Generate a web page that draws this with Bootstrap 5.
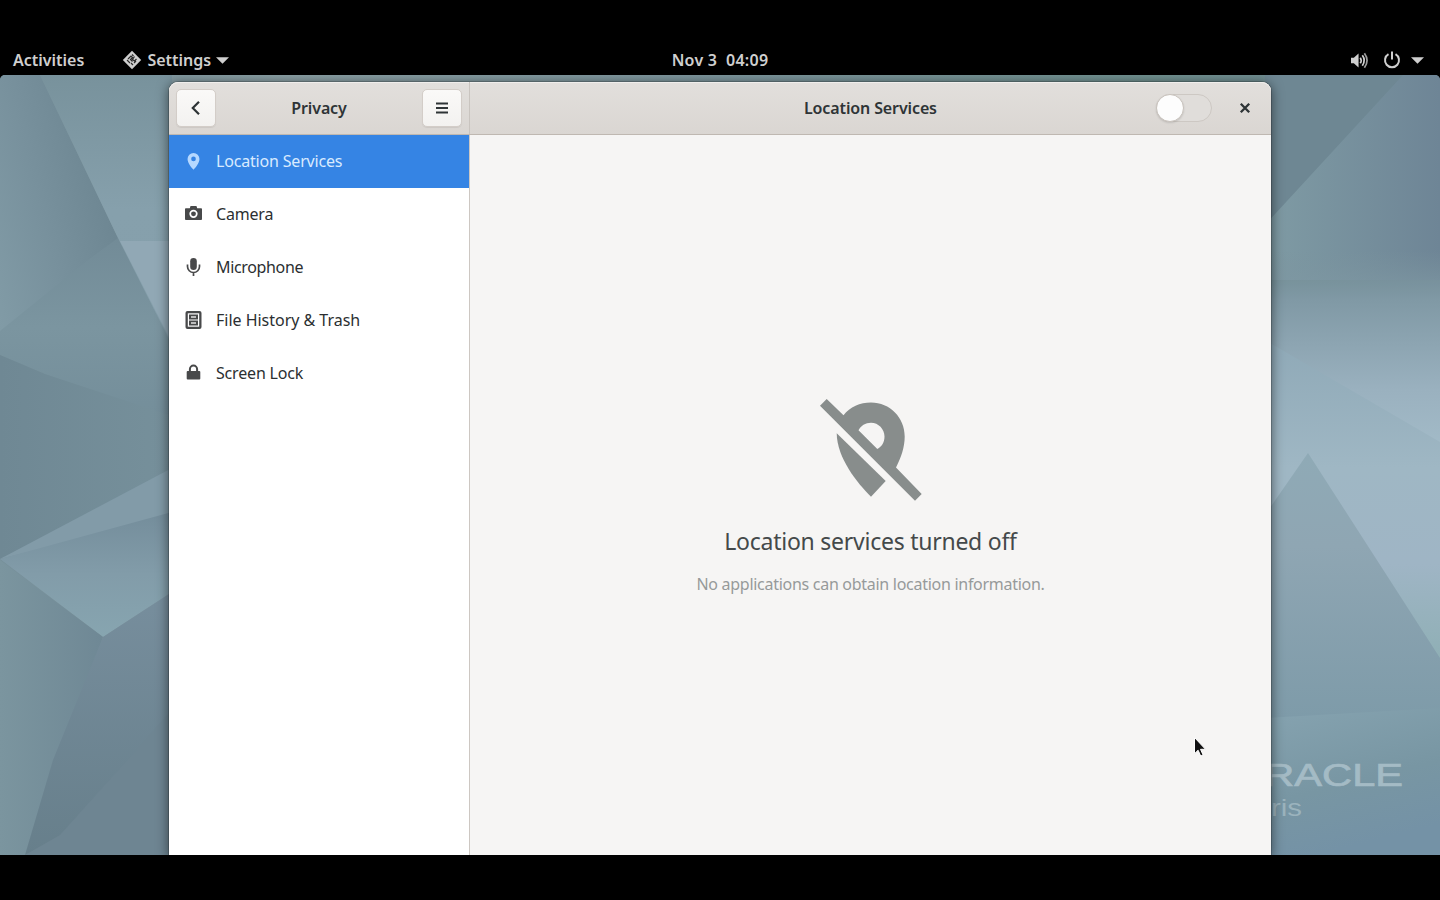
<!DOCTYPE html>
<html lang="en">
  <head>
    <meta charset="UTF-8" />
    <meta name="viewport" content="width=device-width, initial-scale=1" />
    <title>Privacy - Location Services</title>
    <link
      rel="stylesheet"
      href="https://cdn.jsdelivr.net/npm/bootstrap@5.3.0/dist/css/bootstrap.min.css"
    />
    <style>
      body {
        font-family: "Noto Sans", "Open Sans", sans-serif;
        font-size: 16px;
        line-height: 24px;
        background: #000;
        color: #2e3436;
      }

      svg {
        display: block;
        flex-shrink: 0;
      }

      /* Top bar */
      .top-bar {
        height: 75px;
        padding: 45px 16px 0 13px;
        color: #cfcfcf;
        font-weight: 600;
      }

      .top-side {
        flex: 1 1 0;
      }

      .app-icon {
        margin: 0 5px 0 38px;
      }

      .top-arrow {
        margin-left: 5px;
      }

      .top-clock {
        letter-spacing: 0.25px;
        margin-left: 3px;
      }

      .power-icon {
        margin: 0 10px 0 14px;
      }

      /* Desktop */
      .desktop {
        height: 780px;
        border-radius: 5px 5px 0 0;
        padding: 7px 169px 0;
      }

      .wallpaper {
        position: absolute;
        left: 0;
        top: 0;
      }

      .app-window {
        height: 773px;
        border-radius: 9px 9px 0 0;
        box-shadow: 0 2px 12px 1px rgba(0, 0, 0, 0.5), 0 0 0 1px rgba(0, 0, 0, 0.18);
        background: #f6f5f4;
      }

      .title-bar {
        height: 53px;
        border-radius: 9px 9px 0 0;
        background: linear-gradient(#e2dfdc, #dad6d2);
        border-bottom: 1px solid #bfb8b1;
        box-shadow: inset 0 1px #f0eeec;
        font-weight: 600;
        letter-spacing: -0.12px;
      }

      .title-left {
        width: 301px;
        padding: 0 7px;
        border-right: 1px solid #c9c4bf;
      }

      .title-right {
        padding-right: 16px;
      }

      .title-text {
        margin-left: 334px;
      }

      .close-icon {
        margin-left: 23px;
      }

      .tool-btn {
        --bs-btn-padding-x: 0;
        --bs-btn-padding-y: 0;
        width: 40px;
        height: 38px;
        border: 1px solid #d3cdc8;
        border-radius: 5px;
        background: linear-gradient(#faf9f8, #f3f2f0);
        box-shadow: 0 1px 1px rgba(0, 0, 0, 0.07);
        color: #2e3436;
      }

      .side-panel {
        width: 301px;
        border-right: 1px solid #cdc7c2;
        background: #fff;
      }

      .side-panel .list-group-item {
        height: 53px;
        padding: 0 16px 2px;
        border: 0;
        color: #2b2f31;
        letter-spacing: -0.18px;
        --bs-list-group-active-bg: #3584e4;
      }

      .side-panel .list-group-item.active {
        margin: 0;
        padding-bottom: 1px;
        color: #d9ebff;
      }

      .side-panel .list-group-item svg {
        margin-right: 14px;
        color: #48494a;
      }

      .side-panel .list-group-item.active svg {
        color: #b5d8ff;
      }

      .side-panel .wide-label {
        letter-spacing: -0.02px;
      }

      .side-panel .tight-label {
        letter-spacing: -0.35px;
      }

      /* Switch */
      .gnome-switch {
        width: 56px;
        height: 28px;
        border: 1px solid #cdc8c3;
        border-radius: 14px;
        background: #e0ddda;
      }

      .switch-knob {
        width: 28px;
        height: 28px;
        margin: -1px;
        border: 1px solid #c8c2bc;
        border-radius: 50%;
        background: #fdfdfd;
        box-shadow: 0 1px 2px rgba(0, 0, 0, 0.12);
      }

      /* Empty state */
      .off-icon {
        margin: 245px 2px 0 0;
      }

      .empty-title {
        margin-top: 5px;
        font-size: 23px;
        line-height: 32px;
        letter-spacing: -0.25px;
        color: #44494a;
      }

      .empty-text {
        margin-top: 15px;
        letter-spacing: -0.28px;
        color: #969a9a;
      }

      .pointer {
        position: absolute;
        left: 1193px;
        top: 661px;
      }
    </style>
  </head>
  <body class="vh-100 overflow-hidden">
    <!-- Top bar -->
    <header class="top-bar d-flex align-items-center">
      <div class="top-side d-flex align-items-center">
        <span>Activities</span>
        <svg class="app-icon" width="20" height="20" viewBox="0 0 20 20">
          <path d="M10 .8 19.200 10 10 19.200.8 10Z" fill="#cfcfcf" />
          <path d="m6 9 3-3 1.500 1.500-2 2 2 2M9 13l2 2M12.500 6.500l-2 3 2 1.500 2-2M12 13l2-2" fill="none" stroke="#2a2a2a" stroke-width="1.200" />
          <path d="m5 10 3 3M10 4.500l1.500 1.500" stroke="#2a2a2a" stroke-width="1.100" />
        </svg>
        <span>Settings</span>
        <svg class="top-arrow" width="13" height="7" viewBox="0 0 13 7">
          <path d="M0 .3h13L6.500 6.700Z" fill="#cfcfcf" />
        </svg>
      </div>
      <div class="top-clock">Nov 3&nbsp; 04:09</div>
      <div class="top-side d-flex align-items-center justify-content-end">
        <svg width="19" height="17" viewBox="0 0 20 18">
          <path d="M1 6h3l5-4.500v15L4 12H1Z" fill="#cfcfcf" />
          <path d="M10.800 6q2 3 0 6M13 3.500q4 5.500 0 11" fill="none" stroke="#cfcfcf" stroke-width="1.800" />
          <path d="M15.200 1.300q5.600 7.700 0 15.400" fill="none" stroke="#9d9d9d" stroke-width="1.800" />
        </svg>
        <svg class="power-icon" width="18" height="18" viewBox="0 0 18 18" fill="none" stroke="#cfcfcf" stroke-width="2">
          <path d="M5.500 3.200a7 7 0 1 0 7 0M9 .5v8" />
        </svg>
        <svg width="13" height="7" viewBox="0 0 13 7">
          <path d="M0 .3h13L6.500 6.700Z" fill="#cfcfcf" />
        </svg>
      </div>
    </header>

    <!-- Desktop -->
    <main class="desktop position-relative overflow-hidden">
      <svg class="wallpaper" width="1440" height="780" viewBox="0 75 1440 780">
        <defs>
          <linearGradient id="g1" x1="0" y1="1" x2="1" y2=".45">
            <stop offset="0" stop-color="#819ba6" />
            <stop offset=".5" stop-color="#77909c" />
            <stop offset="1" stop-color="#6c8591" />
          </linearGradient>
          <linearGradient id="g2" x1="0" y1="0" x2="0" y2="1">
            <stop offset="0" stop-color="#78929c" />
            <stop offset=".5" stop-color="#86a0ac" />
            <stop offset="1" stop-color="#859fab" />
          </linearGradient>
          <linearGradient id="g3" x1="0" y1="0" x2="0" y2="1">
            <stop offset="0" stop-color="#728b97" />
            <stop offset=".5" stop-color="#7b95a0" />
            <stop offset="1" stop-color="#748e9a" />
          </linearGradient>
          <linearGradient id="g4" x1="0" y1="0" x2="1" y2="0">
            <stop offset="0" stop-color="#6f8894" />
            <stop offset="1" stop-color="#76909b" />
          </linearGradient>
          <linearGradient id="g5" x1="0" y1="0" x2="0" y2="1">
            <stop offset="0" stop-color="#748d9b" />
            <stop offset=".5" stop-color="#829ca9" />
            <stop offset="1" stop-color="#87a5b0" />
          </linearGradient>
          <linearGradient id="g6" x1="0" y1="0" x2="1" y2="0">
            <stop offset="0" stop-color="#7b959f" />
            <stop offset="1" stop-color="#6f8895" />
          </linearGradient>
          <linearGradient id="g7" x1="0" y1="0" x2="0" y2="1">
            <stop offset="0" stop-color="#778e9d" />
            <stop offset="1" stop-color="#677f8b" />
          </linearGradient>
          <linearGradient id="g8" x1="0" y1="0" x2="1" y2="0">
            <stop offset="0" stop-color="#7f9ba4" />
            <stop offset="1" stop-color="#6e8596" />
          </linearGradient>
          <linearGradient id="g9" x1="0" y1="0" x2="0" y2="1">
            <stop offset="0" stop-color="#7a939d" stop-opacity="0" />
            <stop offset=".25" stop-color="#8099a5" />
            <stop offset=".7" stop-color="#9ab1bf" />
            <stop offset="1" stop-color="#a3bbc8" />
          </linearGradient>
          <linearGradient id="g10" x1="0" y1="0" x2="0" y2="1">
            <stop offset="0" stop-color="#8fa9b7" />
            <stop offset=".4" stop-color="#9fb7c4" />
            <stop offset=".7" stop-color="#9fb5c5" />
            <stop offset="1" stop-color="#8fafb5" />
          </linearGradient>
          <linearGradient id="g11" x1="0" y1="0" x2="0" y2="1">
            <stop offset="0" stop-color="#8faab6" />
            <stop offset=".35" stop-color="#8fa6b3" />
            <stop offset="1" stop-color="#7e9ba9" />
          </linearGradient>
          <linearGradient id="g12" x1="0" y1="0" x2=".3" y2="1">
            <stop offset="0" stop-color="#86a3b0" />
            <stop offset=".6" stop-color="#7896a3" />
            <stop offset="1" stop-color="#7492a6" />
          </linearGradient>
          <linearGradient id="g13" x1="0" y1="0" x2="1" y2="0">
            <stop offset="0" stop-color="#768f99" />
            <stop offset=".2" stop-color="#8a9fa4" />
            <stop offset=".5" stop-color="#7c959c" />
            <stop offset=".8" stop-color="#70908f" />
            <stop offset="1" stop-color="#708995" />
          </linearGradient>
        </defs>
        <path d="M0 75h1440v780H0Z" fill="url(#g13)" />
        <!-- left facets -->
        <path d="m0 328 88-70 30-22 54 107v75L45 374 0 355Z" fill="url(#g3)" />
        <path d="M0 75h40l78 163-30 22L0 331Z" fill="url(#g1)" />
        <path d="M40 75h132v270l-54-107Z" fill="url(#g2)" />
        <path d="M120 241h52v102Z" fill="#91a8b5" />
        <path d="m0 355 45 19 127 42v60L0 559Z" fill="url(#g4)" />
        <path d="m0 559 172-91v48Z" fill="#829ba8" />
        <path d="m0 559 172-47v80l-69 45Z" fill="url(#g5)" />
        <path d="m0 560 103 77-50 150-28 68H0Z" fill="url(#g6)" />
        <path d="m103 637 69-45v122L60 840l-35 15 28-95Z" fill="url(#g7)" />
        <path d="M172 710v145H25l35-20Z" fill="#6e8592" />
        <!-- right facets -->
        <path d="M1265 75h138l-121 132-17 18Z" fill="#6e8793" />
        <path d="M1403 75h37v205h-175v-55Z" fill="url(#g8)" />
        <path d="M1265 250h175v200l-175-105Z" fill="url(#g9)" />
        <path d="m1265 340 175 102v218h-175Z" fill="url(#g10)" />
        <path d="m1308 453 132 205v60h-175V515Z" fill="url(#g11)" />
        <path d="m1265 718 175-10v147h-175Z" fill="url(#g12)" />
        <!-- desktop branding -->
        <g font-family="Liberation Sans, sans-serif">
          <text x="1232" y="786" font-size="32" textLength="171" lengthAdjust="spacingAndGlyphs" fill="#a4bbc5" stroke="#a4bbc5" stroke-width=".7">ORACLE</text>
          <text x="1212" y="816" font-size="24" textLength="90" lengthAdjust="spacingAndGlyphs" fill="#9bb3bd">Solaris</text>
        </g>
      </svg>

      <!-- Settings window -->
      <div class="app-window position-relative d-flex flex-column">
        <div class="title-bar d-flex">
          <div class="title-left d-flex align-items-center justify-content-between">
            <button class="btn tool-btn d-flex align-items-center justify-content-center" type="button" aria-label="Back">
              <svg width="16" height="16" viewBox="0 0 16 16" fill="none" stroke="currentColor" stroke-width="2.200">
                <path d="M11 1.800 4.800 8l6.200 6.200" />
              </svg>
            </button>
            <span>Privacy</span>
            <button class="btn tool-btn d-flex align-items-center justify-content-center" type="button" aria-label="Menu">
              <svg width="12" height="12" viewBox="0 0 12 12" fill="none" stroke="currentColor" stroke-width="2">
                <path d="M0 1.500h12M0 6h12M0 10.500h12" />
              </svg>
            </button>
          </div>
          <div class="title-right flex-grow-1 d-flex align-items-center">
            <span class="title-text">Location Services</span>
            <div class="gnome-switch ms-auto" role="switch" aria-checked="false">
              <div class="switch-knob"></div>
            </div>
            <svg class="close-icon" width="20" height="20" viewBox="0 0 20 20" stroke="#2e3436" stroke-width="2.300">
              <path d="m5.800 5.800 8.400 8.400M14.200 5.800l-8.400 8.400" />
            </svg>
          </div>
        </div>

        <div class="flex-grow-1 d-flex">
          <nav class="side-panel">
            <div class="list-group list-group-flush">
              <a href="#" class="list-group-item active d-flex align-items-center">
                <svg width="17" height="17" viewBox="0 0 16 16" fill="currentColor">
                  <path fill-rule="evenodd" d="M8 0a5.600 5.600 0 0 0-5.600 5.600C2.400 9.500 6 13.500 8 15.800c2-2.300 5.600-6.300 5.600-10.200A5.600 5.600 0 0 0 8 0Zm0 3.400a2.200 2.200 0 1 1 0 4.400 2.200 2.200 0 0 1 0-4.400Z" />
                </svg>
                <span>Location Services</span>
              </a>
              <a href="#" class="list-group-item d-flex align-items-center">
                <svg width="17" height="17" viewBox="0 0 16 16" fill="currentColor">
                  <path d="M5.200 1h5.600l.7 2h3.700q.8 0 .8.800v9.400q0 .8-.8.800H.8q-.8 0-.8-.8V3.800Q0 3 .8 3h3.700Z" />
                  <circle cx="8" cy="8.300" r="3.100" fill="none" stroke="#fff" stroke-width="1.600" />
                </svg>
                <span>Camera</span>
              </a>
              <a href="#" class="list-group-item d-flex align-items-center">
                <svg width="17" height="18" viewBox="0 0 17 18" fill="none" stroke="currentColor" stroke-width="1.700">
                  <rect x="5.200" y="0" width="6.600" height="12" rx="3.300" fill="currentColor" stroke="none" />
                  <path d="M2.500 6.500v2a6 6 0 0 0 12 0v-2M8.500 14.300V18" />
                </svg>
                <span class="tight-label">Microphone</span>
              </a>
              <a href="#" class="list-group-item d-flex align-items-center">
                <!-- two-drawer cabinet -->
                <svg width="17" height="18" viewBox="0 0 17 18">
                  <rect x=".5" width="16" height="18" rx="2" fill="currentColor" />
                  <rect x="2.800" y="2.300" width="11.400" height="13.400" fill="#fff" />
                  <rect x="4" y="3.500" width="9" height="5" fill="currentColor" />
                  <rect x="4" y="9.500" width="9" height="5" fill="currentColor" />
                  <path d="M6 6h5M6 12h5" stroke="#e4e4e4" stroke-width="1.400" />
                </svg>
                <span class="wide-label">File History &amp; Trash</span>
              </a>
              <a href="#" class="list-group-item d-flex align-items-center">
                <svg width="17" height="17" viewBox="0 0 17 17">
                  <path d="M4.900 8V5.200a3.600 3.600 0 0 1 7.200 0V8" fill="none" stroke="currentColor" stroke-width="2" />
                  <rect x="1.700" y="7" width="13.600" height="8.500" rx="1" fill="currentColor" />
                </svg>
                <span>Screen Lock</span>
              </a>
            </div>
          </nav>

          <section class="flex-grow-1 d-flex flex-column align-items-center">
            <svg class="off-icon" width="140" height="140" viewBox="0 0 140 140" fill="#888d8c">
              <path d="m26.700 19 16.800 16.200C50 27 60 22.500 71 22.500c19 0 33.700 15 33.700 34 0 11-3.700 21-8.700 31l25.700 26.500-6.700 6.700-95-95ZM58.500 50.300 77.300 69C82 66.500 84.500 62 84.500 56.500 84.500 49 78.500 42.700 71 42.700c-5.500 0-10.300 3-12.500 7.600Z" fill-rule="evenodd" />
              <path d="m36.700 53.300 49 47.700L71 116.700C57 103 37 78 36.700 53.300Z" />
            </svg>
            <div class="empty-title">Location services turned off</div>
            <div class="empty-text">No applications can obtain location information.</div>
          </section>
        </div>
      </div>

      <svg class="pointer" width="16" height="24" viewBox="0 0 16 24">
        <path d="M1.500 1.500v16.200l3.600-3.500 2.600 5.800 2.400-1-2.600-5.700h5Z" fill="#111" stroke="#fff" stroke-width="1" />
      </svg>
    </main>

    <script src="https://cdn.jsdelivr.net/npm/bootstrap@5.3.0/dist/js/bootstrap.bundle.min.js"></script>
  </body>
</html>
